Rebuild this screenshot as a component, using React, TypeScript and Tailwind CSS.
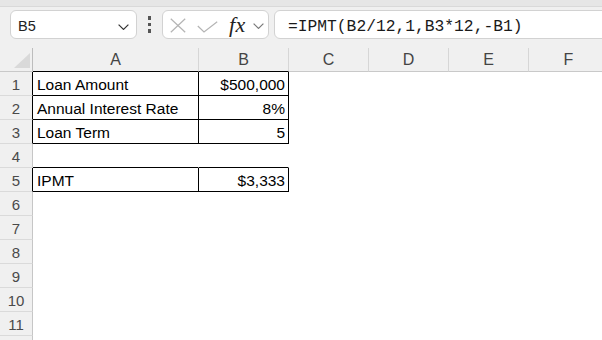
import React from "react";

const colHeaders = [
  { l: "A", cls: "w-[166px] border-b-black" },
  { l: "B", cls: "w-[90px] border-b-black" },
  { l: "C", cls: "w-[80px] border-b-[#c9c9c9]" },
  { l: "D", cls: "w-[80px] border-b-[#c9c9c9]" },
  { l: "E", cls: "w-[80px] border-b-[#c9c9c9]" },
  { l: "F", cls: "w-[80px] border-b-[#c9c9c9]" },
];

type RowDef = { n: number | string; a?: string; b?: string; table: boolean; bottom: boolean };

const rows: RowDef[] = [
  { n: 1, a: "Loan Amount", b: "$500,000", table: true, bottom: true },
  { n: 2, a: "Annual Interest Rate", b: "8%", table: true, bottom: true },
  { n: 3, a: "Loan Term", b: "5", table: true, bottom: true },
  { n: 4, table: false, bottom: true },
  { n: 5, a: "IPMT", b: "$3,333", table: true, bottom: true },
  { n: 6, table: false, bottom: false },
  { n: 7, table: false, bottom: false },
  { n: 8, table: false, bottom: false },
  { n: 9, table: false, bottom: false },
  { n: 10, table: false, bottom: false },
  { n: 11, table: false, bottom: false },
  { n: "", table: false, bottom: false },
];

function Chevron({ color }: { color: string }) {
  return (
    <svg width={11} height={6} viewBox="0 0 11 6" className="block">
      <polyline points="0.6,0.6 5.5,5.4 10.4,0.6" fill="none" stroke={color} strokeWidth={1.2} />
    </svg>
  );
}

function Row({ r }: { r: RowDef }) {
  return (
    <div className="flex h-[24px] shrink-0">
      <div
        className={
          "w-[33px] h-[24px] shrink-0 bg-[#f0f0f0] border-r border-b border-b-[#dadada] flex items-end justify-center text-[15px] leading-[20px] text-[#4a4a4a] " +
          (r.table ? "border-r-black" : "border-r-[#c6c6c6]")
        }
      >
        {r.n}
      </div>
      <div
        className={
          "w-[166px] h-[24px] shrink-0 border-r border-b flex items-end pl-[4px] text-[15.5px] leading-[20px] text-black whitespace-nowrap " +
          (r.table ? "border-r-black " : "border-r-transparent ") +
          (r.bottom ? "border-b-black" : "border-b-transparent")
        }
      >
        {r.a}
      </div>
      <div
        className={
          "w-[90px] h-[24px] shrink-0 border-r border-b flex items-end justify-end pr-[3px] text-[15.5px] leading-[20px] text-black whitespace-nowrap " +
          (r.table ? "border-r-black " : "border-r-transparent ") +
          (r.bottom ? "border-b-black" : "border-b-transparent")
        }
      >
        {r.b}
      </div>
      <div className="flex-1" />
    </div>
  );
}

export default function App() {
  return (
    <div className="w-[602px] h-[340px] overflow-hidden bg-white font-['Liberation_Sans',Arial,sans-serif] flex flex-col">
      {/* top band */}
      <div className="h-[6px] shrink-0 bg-[#e6e6e6]" />
      <div className="h-[1px] shrink-0 bg-[#d9d9d9]" />
      {/* formula toolbar */}
      <div className="h-[41px] shrink-0 bg-[#f0f0f0] flex items-start pt-[3px]">
        <div className="ml-[10px] w-[127px] h-[29px] shrink-0 bg-white border border-[#d2d2d2] rounded-[6px] flex items-start justify-between pl-[7px] pr-[7px]">
          <span className="pt-[8px] text-[14.5px] leading-[14px] text-[#222]">B5</span>
          <span className="pt-[13px]">
            <Chevron color="#333333" />
          </span>
        </div>
        <div className="w-[25px] h-[29px] shrink-0 flex flex-col items-center justify-center gap-[3px]">
          <span className="block w-[3.5px] h-[3.5px] bg-[#555]" />
          <span className="block w-[3.5px] h-[3.5px] bg-[#555]" />
          <span className="block w-[3.5px] h-[3.5px] bg-[#555]" />
        </div>
        <div className="w-[107px] h-[29px] shrink-0 bg-white border border-[#d2d2d2] rounded-[6px] flex items-center pl-[7px]">
          <svg width={16} height={15} viewBox="0 0 16 15" className="block shrink-0 mt-[2px]">
            <line x1="0.8" y1="0.8" x2="15.2" y2="14.2" stroke="#b4b4b4" strokeWidth={1.2} />
            <line x1="15.2" y1="0.8" x2="0.8" y2="14.2" stroke="#b4b4b4" strokeWidth={1.2} />
          </svg>
          <svg width={21} height={12} viewBox="0 0 21 12" className="block shrink-0 ml-[11px] mt-[4px]">
            <polyline points="0.8,5 7,11 20.2,0.8" fill="none" stroke="#b4b4b4" strokeWidth={1.2} />
          </svg>
          <span className="ml-[11px] w-[20px] shrink-0 font-['Liberation_Serif',serif] italic text-[22px] leading-[20px] tracking-[0.5px] text-[#222] pt-[1px]">
            fx
          </span>
          <span className="ml-[4px] mt-[3px] shrink-0">
            <Chevron color="#7a7a7a" />
          </span>
        </div>
        <div className="ml-[5px] w-[340px] h-[29px] shrink-0 bg-white border border-[#d2d2d2] rounded-[6px] pl-[13px] pt-[8px]">
          <span className="block font-['Liberation_Mono',monospace] text-[16.3px] leading-[16px] text-[#1a1a1a] whitespace-nowrap">
            =IPMT(B2/12,1,B3*12,-B1)
          </span>
        </div>
      </div>
      {/* column headers */}
      <div className="flex h-[24px] shrink-0 bg-[#f0f0f0]">
        <div className="w-[33px] h-[24px] shrink-0 border-r border-r-[#bdbdbd] border-b border-b-[#c9c9c9] flex items-end justify-end pr-[2px] pb-[3px]">
          <svg width={16} height={15} viewBox="0 0 16 15" className="block">
            <polygon points="16,0 16,15 0,15" fill="#d9d9d9" />
          </svg>
        </div>
        {colHeaders.map((c) => (
          <div
            key={c.l}
            className={
              "h-[24px] shrink-0 border-r border-r-[#d6d6d6] border-b flex items-end justify-center pb-[1px] text-[16px] leading-[20px] text-[#444] " +
              c.cls
            }
          >
            {c.l}
          </div>
        ))}
      </div>
      {/* rows */}
      {rows.map((r, i) => (
        <Row key={i} r={r} />
      ))}
    </div>
  );
}
